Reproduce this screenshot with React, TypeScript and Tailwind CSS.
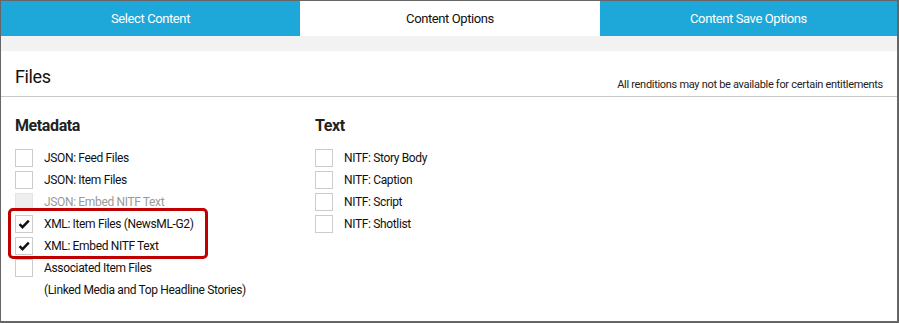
import React from "react";

const font = { fontFamily: "Roboto, 'Liberation Sans', sans-serif" };

type Item = { label: string; checked?: boolean; disabled?: boolean; sub?: string };

const metadata: Item[] = [
  { label: "JSON: Feed Files" },
  { label: "JSON: Item Files" },
  { label: "JSON: Embed NITF Text", disabled: true },
  { label: "XML: Item Files (NewsML-G2)", checked: true },
  { label: "XML: Embed NITF Text", checked: true },
  { label: "Associated Item Files", sub: "(Linked Media and Top Headline Stories)" },
];

const text: Item[] = [
  { label: "NITF: Story Body" },
  { label: "NITF: Caption" },
  { label: "NITF: Script" },
  { label: "NITF: Shotlist" },
];

const Check = () => (
  <svg width="12" height="10" viewBox="0 0 12 10">
    <path d="M1.5 5.2 L4.5 8.2 L10.8 1.6" fill="none" stroke="#111" strokeWidth="2.4" />
  </svg>
);

const Row = ({ item }: { item: Item }) => (
  <div>
    <div className="flex items-center h-[22px]">
      <div
        className={`w-[18px] h-[18px] border flex items-center justify-center ${
          item.disabled ? "bg-[#eeeeee] border-[#e4e4e4]" : "bg-white border-[#cccccc]"
        }`}
      >
        {item.checked && <Check />}
      </div>
      <span
        className={`ml-[11px] text-[12px] tracking-[-0.35px] ${
          item.disabled ? "text-[#9a9a9a]" : "text-[#111]"
        }`}
      >
        {item.label}
      </span>
    </div>
    {item.sub && (
      <div className="h-[22px] flex items-center pl-[29px] text-[12px] tracking-[-0.35px] text-[#111]">
        {item.sub}
      </div>
    )}
  </div>
);

export default function App() {
  return (
    <div
      className="w-[899px] h-[323px] bg-white border-t border-l border-r-2 border-b-2 border-[#666] overflow-hidden"
      style={font}
    >
      <div className="flex h-[35px] text-[13px] tracking-[-0.4px]">
        <div className="w-[299px] bg-[#1ea8da] text-white flex items-center justify-center">
          Select Content
        </div>
        <div className="w-[300px] bg-white text-[#111] flex items-center justify-center">
          Content Options
        </div>
        <div className="flex-1 bg-[#1ea8da] text-white flex items-center justify-center">
          Content Save Options
        </div>
      </div>
      <div className="h-[15px] bg-[#f2f2f2]" />
      <div className="h-[46px] border-b border-[#c8c8c8] flex items-end justify-between px-[14px] pb-[3px]">
        <div className="text-[18px] text-[#111] tracking-[-0.4px] mb-[3px]">Files</div>
        <div className="text-[11px] text-[#222] tracking-[-0.3px]">
          All renditions may not be available for certain entitlements
        </div>
      </div>
      <div className="flex px-[14px] pt-[18px]">
        <div className="w-[300px] relative">
          <div className="text-[16px] font-bold text-[#222] tracking-[-0.4px] h-[21px] leading-[21px] mb-[11px]">
            Metadata
          </div>
          {metadata.map((m) => (
            <Row key={m.label} item={m} />
          ))}
          <div className="absolute left-[-7px] top-[93px] w-[200px] h-[51px] border-[3px] border-[#c00000] rounded-[5px]" />
        </div>
        <div className="flex-1">
          <div className="text-[16px] font-bold text-[#222] tracking-[-0.4px] h-[21px] leading-[21px] mb-[11px]">
            Text
          </div>
          {text.map((m) => (
            <Row key={m.label} item={m} />
          ))}
        </div>
      </div>
    </div>
  );
}
